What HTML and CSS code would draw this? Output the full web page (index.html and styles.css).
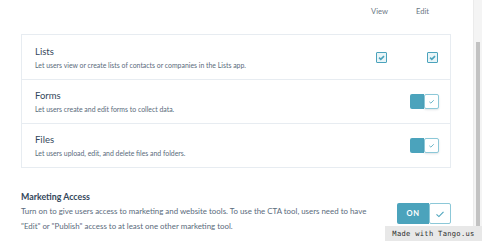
FILE: index.html
```html
<!DOCTYPE html>
<html lang="en">
<head>
    <meta charset="UTF-8">
    <meta name="viewport" content="width=device-width, initial-scale=1.0">
    <title>Permissions - Marketing</title>
    <link rel="stylesheet" href="styles.css">
</head>
<body>
    <div class="frame">
        <main class="content">
            <div class="column-head">
                <span class="column-label">View</span>
                <span class="column-label">Edit</span>
            </div>

            <div class="tool-panel">
                <div class="tool-row">
                    <div class="tool-text">
                        <h3 class="tool-title">Lists</h3>
                        <p class="tool-description">Let users view or create lists of contacts or companies in the Lists app.</p>
                    </div>
                    <div class="tool-controls tool-controls--checks">
                        <span class="check-box">
                            <svg viewBox="0 0 10 10"><path d="M2.3 5.2l1.9 1.8 3.6-3.6"></path></svg>
                        </span>
                        <span class="check-box">
                            <svg viewBox="0 0 10 10"><path d="M2.3 5.2l1.9 1.8 3.6-3.6"></path></svg>
                        </span>
                    </div>
                </div>

                <div class="tool-row">
                    <div class="tool-text">
                        <h3 class="tool-title">Forms</h3>
                        <p class="tool-description">Let users create and edit forms to collect data.</p>
                    </div>
                    <div class="tool-controls">
                        <span class="mini-toggle">
                            <span class="mini-toggle-fill"></span>
                            <span class="mini-toggle-knob">
                                <svg viewBox="0 0 10 10"><path d="M2.6 5.3l1.7 1.5 3.2-3.2"></path></svg>
                            </span>
                        </span>
                    </div>
                </div>

                <div class="tool-row">
                    <div class="tool-text">
                        <h3 class="tool-title">Files</h3>
                        <p class="tool-description">Let users upload, edit, and delete files and folders.</p>
                    </div>
                    <div class="tool-controls">
                        <span class="mini-toggle">
                            <span class="mini-toggle-fill"></span>
                            <span class="mini-toggle-knob">
                                <svg viewBox="0 0 10 10"><path d="M2.6 5.3l1.7 1.5 3.2-3.2"></path></svg>
                            </span>
                        </span>
                    </div>
                </div>
            </div>

            <section class="access-section">
                <div class="access-text">
                    <h2 class="access-title">Marketing Access</h2>
                    <p class="access-description">Turn on to give users access to marketing and website tools. To use the CTA tool, users need to have "Edit" or "Publish" access to at least one other marketing tool.</p>
                </div>
                <span class="big-toggle">
                    <span class="big-toggle-label">ON</span>
                    <span class="big-toggle-knob">
                        <svg viewBox="0 0 12 12"><path d="M2.5 6.4l2.4 2.2 4.6-4.8"></path></svg>
                    </span>
                </span>
            </section>
        </main>

        <div class="scroll-track">
            <div class="scroll-thumb"></div>
        </div>
    </div>

    <div class="tango-badge">Made with Tango.us</div>
</body>
</html>
```

FILE: styles.css
```css
:root {
    --teal: #4ba3bc;
    --teal-light: #8cc8d8;
    --ink: #33475b;
    --ink-soft: #5a6b7c;
    --line: #e7ecf1;
}

* {
    margin: 0;
    padding: 0;
    box-sizing: border-box;
    font-family: Lato, "Open Sans", sans-serif;
}

body {
    width: 482px;
    height: 241px;
    overflow: hidden;
    background: #ffffff;
    position: relative;
}

.frame {
    display: flex;
    height: 241px;
}

.content {
    flex: 1;
    padding: 0 22px 0 21px;
}

/* column headings for the checkbox columns */
.column-head {
    height: 34px;
    display: flex;
    justify-content: flex-end;
    align-items: flex-start;
    gap: 24px;
    padding: 6px 19px 0 0;
}

.column-label {
    font-size: 7.6px;
    color: #6b7885;
    line-height: 10px;
    width: 19px;
    text-align: center;
}

.tool-panel {
    border: 1px solid var(--line);
}

.tool-row {
    display: flex;
    align-items: center;
    height: 44px;
    padding: 0 11px 0 13px;
    border-top: 1px solid var(--line);
}

.tool-row:first-child {
    border-top: none;
}

.tool-text {
    flex: 1;
    display: flex;
    flex-direction: column;
    gap: 3px;
    padding-top: 1px;
}

.tool-title {
    font-size: 9.5px;
    font-weight: 400;
    color: var(--ink);
    line-height: 12px;
}

.tool-description {
    font-size: 6.9px;
    color: var(--ink-soft);
    line-height: 9px;
}

.tool-controls {
    display: flex;
    align-items: center;
}

.tool-controls--checks {
    gap: 40px;
    padding-right: 1px;
}

.check-box {
    width: 11px;
    height: 11px;
    border: 1.5px solid var(--teal);
    border-radius: 1px;
    background: #e9f5f8;
    display: flex;
    align-items: center;
    justify-content: center;
}

.check-box svg {
    width: 9px;
    height: 9px;
    fill: none;
    stroke: var(--teal);
    stroke-width: 1.8;
}

.mini-toggle {
    display: flex;
    width: 29px;
    height: 15px;
}

.mini-toggle-fill {
    width: 14px;
    background: var(--teal);
    border-radius: 2px 0 0 2px;
}

.mini-toggle-knob {
    width: 15px;
    background: #ffffff;
    border: 1px solid var(--teal-light);
    border-radius: 2px;
    box-shadow: 0 1px 2px rgba(51, 71, 91, 0.15);
    display: flex;
    align-items: center;
    justify-content: center;
}

.mini-toggle-knob svg {
    width: 9px;
    height: 9px;
    fill: none;
    stroke: var(--teal);
    stroke-width: 0.9;
}

.access-section {
    display: flex;
    align-items: center;
    margin-top: 22px;
}

.access-text {
    flex: 1;
}

.access-title {
    font-size: 8.8px;
    font-weight: 700;
    color: var(--ink);
    line-height: 13px;
    margin-bottom: 1px;
}

.access-description {
    max-width: 348px;
    font-size: 7.9px;
    color: var(--ink-soft);
    line-height: 15px;
}

.big-toggle {
    display: flex;
    width: 54px;
    height: 21px;
    margin-top: 3px;
}

.big-toggle-label {
    width: 32px;
    background: var(--teal);
    color: #ffffff;
    font-size: 7.5px;
    font-weight: 700;
    letter-spacing: 0.6px;
    border-radius: 2px 0 0 2px;
    display: flex;
    align-items: center;
    justify-content: center;
}

.big-toggle-knob {
    width: 22px;
    background: #ffffff;
    border: 1px solid var(--teal-light);
    border-radius: 2px;
    display: flex;
    align-items: center;
    justify-content: center;
}

.big-toggle-knob svg {
    width: 12px;
    height: 12px;
    fill: none;
    stroke: var(--teal);
    stroke-width: 1.1;
}

.scroll-track {
    width: 9px;
    background: #f4f4f4;
    border-left: 1px solid #ebebeb;
    padding: 42px 2px 0 2px;
}

.scroll-thumb {
    height: 190px;
    background: #c2c2c2;
}

.tango-badge {
    position: absolute;
    right: 0;
    bottom: 0;
    width: 97px;
    height: 15px;
    background: #e8e8e8;
    color: #2d2d2d;
    font-family: "DejaVu Sans Mono", monospace;
    font-size: 7.1px;
    letter-spacing: 0.3px;
    line-height: 15px;
    text-align: center;
}
```
